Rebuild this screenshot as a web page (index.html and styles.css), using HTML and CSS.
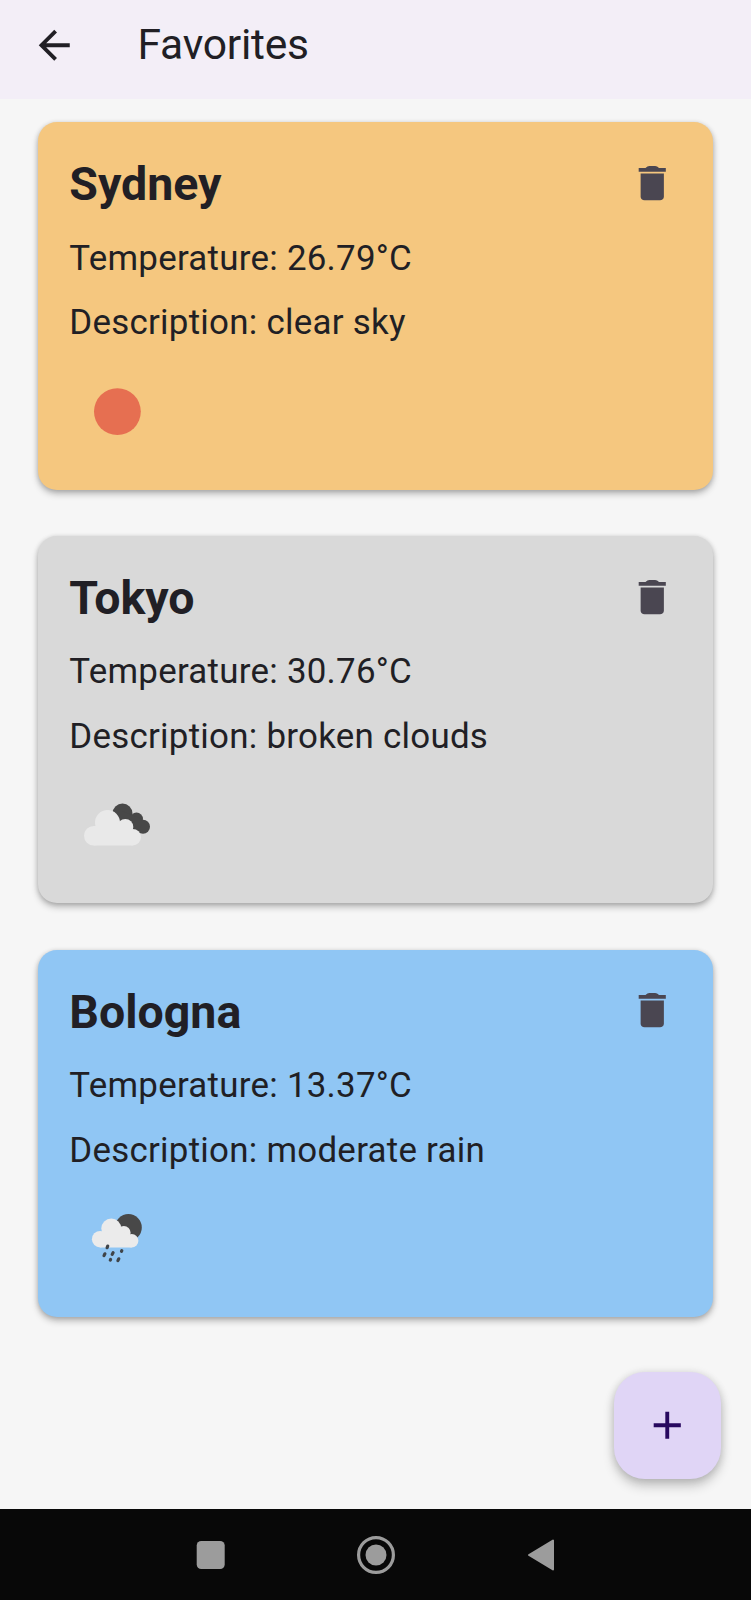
FILE: index.html
```html
<!DOCTYPE html>
<html lang="en">
<head>
<meta charset="utf-8">
<title>Favorites</title>
<link rel="stylesheet" href="styles.css">
</head>
<body>
<svg class="defs" aria-hidden="true">
  <symbol id="trash" viewBox="0 0 24 24"><path d="M6 19c0 1.1.9 1.800 2 1.800h8c1.1 0 2-.7 2-1.800V7H6v12zM19 4.100h-3.500q-1-1-2-1h-3q-1 0-2 1H5v1.900h14z"/></symbol>
</svg>
<div class="screen">
  <header class="appbar">
    <svg class="icon back" viewBox="0 0 24 24"><path d="M20 11H7.83l5.59-5.59L12 4l-8 8 8 8 1.41-1.41L7.83 13H20v-2z"/></svg>
    <h1 class="title">Favorites</h1>
  </header>
  <main class="list">
    <section class="card sunny">
      <div class="card-head"><h2 class="city">Sydney</h2><svg class="icon trash"><use href="#trash"/></svg></div>
      <p class="line">Temperature: 26.79°C</p>
      <p class="line">Description: clear sky</p>
      <svg class="weather" viewBox="69 363 97 97"><circle cx="117.4" cy="411.6" r="23.4" fill="#e66f51"/></svg>
    </section>
    <section class="card cloudy">
      <div class="card-head"><h2 class="city">Tokyo</h2><svg class="icon trash"><use href="#trash"/></svg></div>
      <p class="line">Temperature: 30.76°C</p>
      <p class="line">Description: broken clouds</p>
      <svg class="weather" viewBox="69 777 97 97">
        <g fill="#484848"><circle cx="122.5" cy="814.5" r="10"/><circle cx="136.5" cy="820" r="6.5"/><circle cx="143" cy="827.7" r="7"/><path d="M122 812l20 8-2 14-18-6z"/></g>
        <g fill="#e9e9e9"><circle cx="107.5" cy="823.5" r="12.5"/><circle cx="93.8" cy="836.7" r="9.8"/><circle cx="125.3" cy="828" r="8"/><circle cx="132.7" cy="838.2" r="8.3"/><path d="M93.8 827h31l8 10v9.5h-39z"/></g>
      </svg>
    </section>
    <section class="card rainy">
      <div class="card-head"><h2 class="city">Bologna</h2><svg class="icon trash"><use href="#trash"/></svg></div>
      <p class="line">Temperature: 13.37°C</p>
      <p class="line">Description: moderate rain</p>
      <svg class="weather" viewBox="69 1190.5 97 97">
        <circle cx="128.4" cy="1228" r="13.4" fill="#484848"/>
        <g fill="#ebebeb"><circle cx="111.3" cy="1229" r="10"/><circle cx="100.2" cy="1239.7" r="8.3"/><circle cx="123.8" cy="1233.3" r="6.8"/><circle cx="131.7" cy="1241.3" r="6.7"/><path d="M100.2 1233h24l7.5 7v8h-31.500z"/></g>
        <g stroke="#3f4449" stroke-width="3.2" stroke-linecap="round"><path d="M107.700 1246.600l-.6 1.600M104.900 1254.300l-.9 1.800M113.100 1253.100l-.9 1.800M121.800 1251.200l-.3.700M110.600 1260l-.3.600M118.800 1259.300l-.9 1.800"/></g>
      </svg>
    </section>
  </main>
  <button class="fab" aria-label="Add"><svg class="icon" viewBox="0 0 24 24"><path d="M19 13h-6v6h-2v-6H5v-2h6V5h2v6h6v2z"/></svg></button>
  <nav class="navbar">
    <svg class="nav-icon" viewBox="0 0 40 40"><rect x="5.700" y="6" width="28" height="28" rx="4.500"/></svg>
    <svg class="nav-icon" viewBox="0 0 40 40"><circle cx="20" cy="20" r="17.400" fill="none" stroke="#9c9c9c" stroke-width="3.200"/><circle cx="20" cy="20" r="10.500"/></svg>
    <svg class="nav-icon" viewBox="0 0 40 40"><path d="M8 20L32 5.500v29z" stroke="#9c9c9c" stroke-width="2" stroke-linejoin="round"/></svg>
  </nav>
</div>
</body>
</html>
```
FILE: styles.css
```css
* { box-sizing: border-box; }
body { margin: 0; font-family: Roboto, "Noto Sans", sans-serif; color: #211f25; }
h1, h2, p { margin: 0; }
.defs { position: absolute; width: 0; height: 0; }
.screen {
  position: relative;
  display: flex;
  flex-direction: column;
  width: 751px;
  height: 1600px;
  background: #f6f6f6;
}
.icon { display: block; width: 46.5px; height: 46.5px; fill: currentColor; }
.appbar {
  display: flex;
  align-items: center;
  height: 98.500px;
  padding: 0 0 8px 30.500px;
  background: #f3eef7;
}
.title {
  margin-left: 60.500px;
  font-size: 42.600px;
  font-weight: 400;
  line-height: 54px;
  letter-spacing: -.25px;
  padding-bottom: 2px;
}
.list {
  flex: 1;
  display: flex;
  flex-direction: column;
  gap: 46.300px;
  padding: 23.500px 38px 0 38.300px;
}
.card {
  height: 367.500px;
  padding: 31px;
  border-radius: 19px;
  box-shadow: 0 4px 7px rgba(0, 0, 0, .24), 0 1px 5px rgba(0, 0, 0, .16);
}
.sunny { background: #f5c77f; }
.cloudy { background: #d9d9d9; }
.rainy { background: #90c6f4; }
.card-head {
  display: flex;
  align-items: center;
  justify-content: space-between;
  height: 62px;
  margin-bottom: 18.500px;
  padding-right: 7px;
}
.city { font-size: 46.500px; font-weight: 700; line-height: 62px; }
.trash { margin-bottom: 2px; color: #4a4651; }
.line {
  margin-bottom: 15.600px;
  font-size: 34.900px;
  line-height: 49px;
  letter-spacing: .26px;
  white-space: nowrap;
}
.weather { display: block; width: 97px; height: 97px; }
.fab {
  position: absolute;
  left: 614px;
  top: 1372px;
  display: flex;
  align-items: center;
  justify-content: center;
  width: 107px;
  height: 107px;
  padding: 0;
  border: 0;
  border-radius: 31px;
  background: #e0d5f6;
  color: #27085f;
  box-shadow: 0 7px 12px rgba(0, 0, 0, .2), 0 1px 8px rgba(0, 0, 0, .14);
}
.navbar {
  display: flex;
  align-items: center;
  justify-content: center;
  gap: 125px;
  height: 91px;
  background: #080808;
}
.nav-icon { display: block; width: 40px; height: 40px; fill: #9c9c9c; }
```
